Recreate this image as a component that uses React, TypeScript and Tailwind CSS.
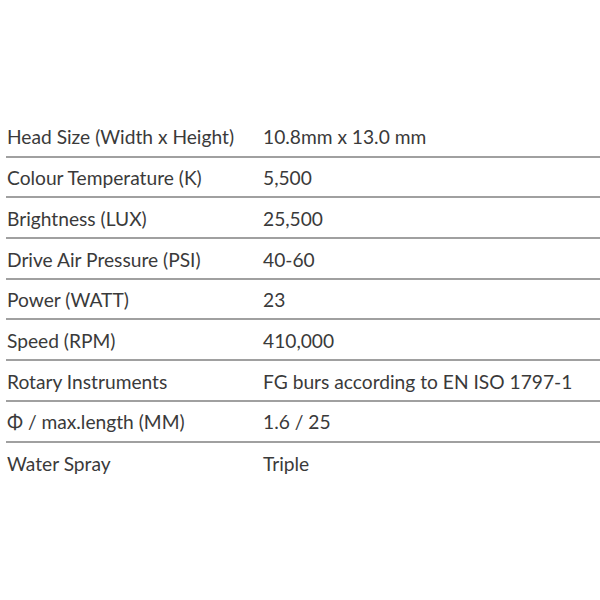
import React from "react"

const SPECS = [
  ["Head Size (Width x Height)", "10.8mm x 13.0 mm"],
  ["Colour Temperature (K)", "5,500"],
  ["Brightness (LUX)", "25,500"],
  ["Drive Air Pressure (PSI)", "40-60"],
  ["Power (WATT)", "23"],
  ["Speed (RPM)", "410,000"],
  ["Rotary Instruments", "FG burs according to EN ISO 1797-1"],
  ["Φ / max.length (MM)", "1.6 / 25"],
  ["Water Spray", "Triple"]
]

const App = () => {
  return (
    <div className="w-[600px] h-[600px] bg-white pt-[117px] pl-[6px] font-['Lato','Liberation_Sans',sans-serif] text-[19.2px] text-[#3a3a3a]">
      {SPECS.map(([label, value], idx) => (
        <div
          key={label}
          className={`grid grid-cols-[257px_1fr] h-[40.7px] items-center pt-[3px] ${
            idx < SPECS.length - 1 ? "border-b-2 border-[#a0a0a0]" : ""
          }`}
        >
          <span className="pl-px">{label}</span>
          <span>{value}</span>
        </div>
      ))}
    </div>
  )
}

export default App
